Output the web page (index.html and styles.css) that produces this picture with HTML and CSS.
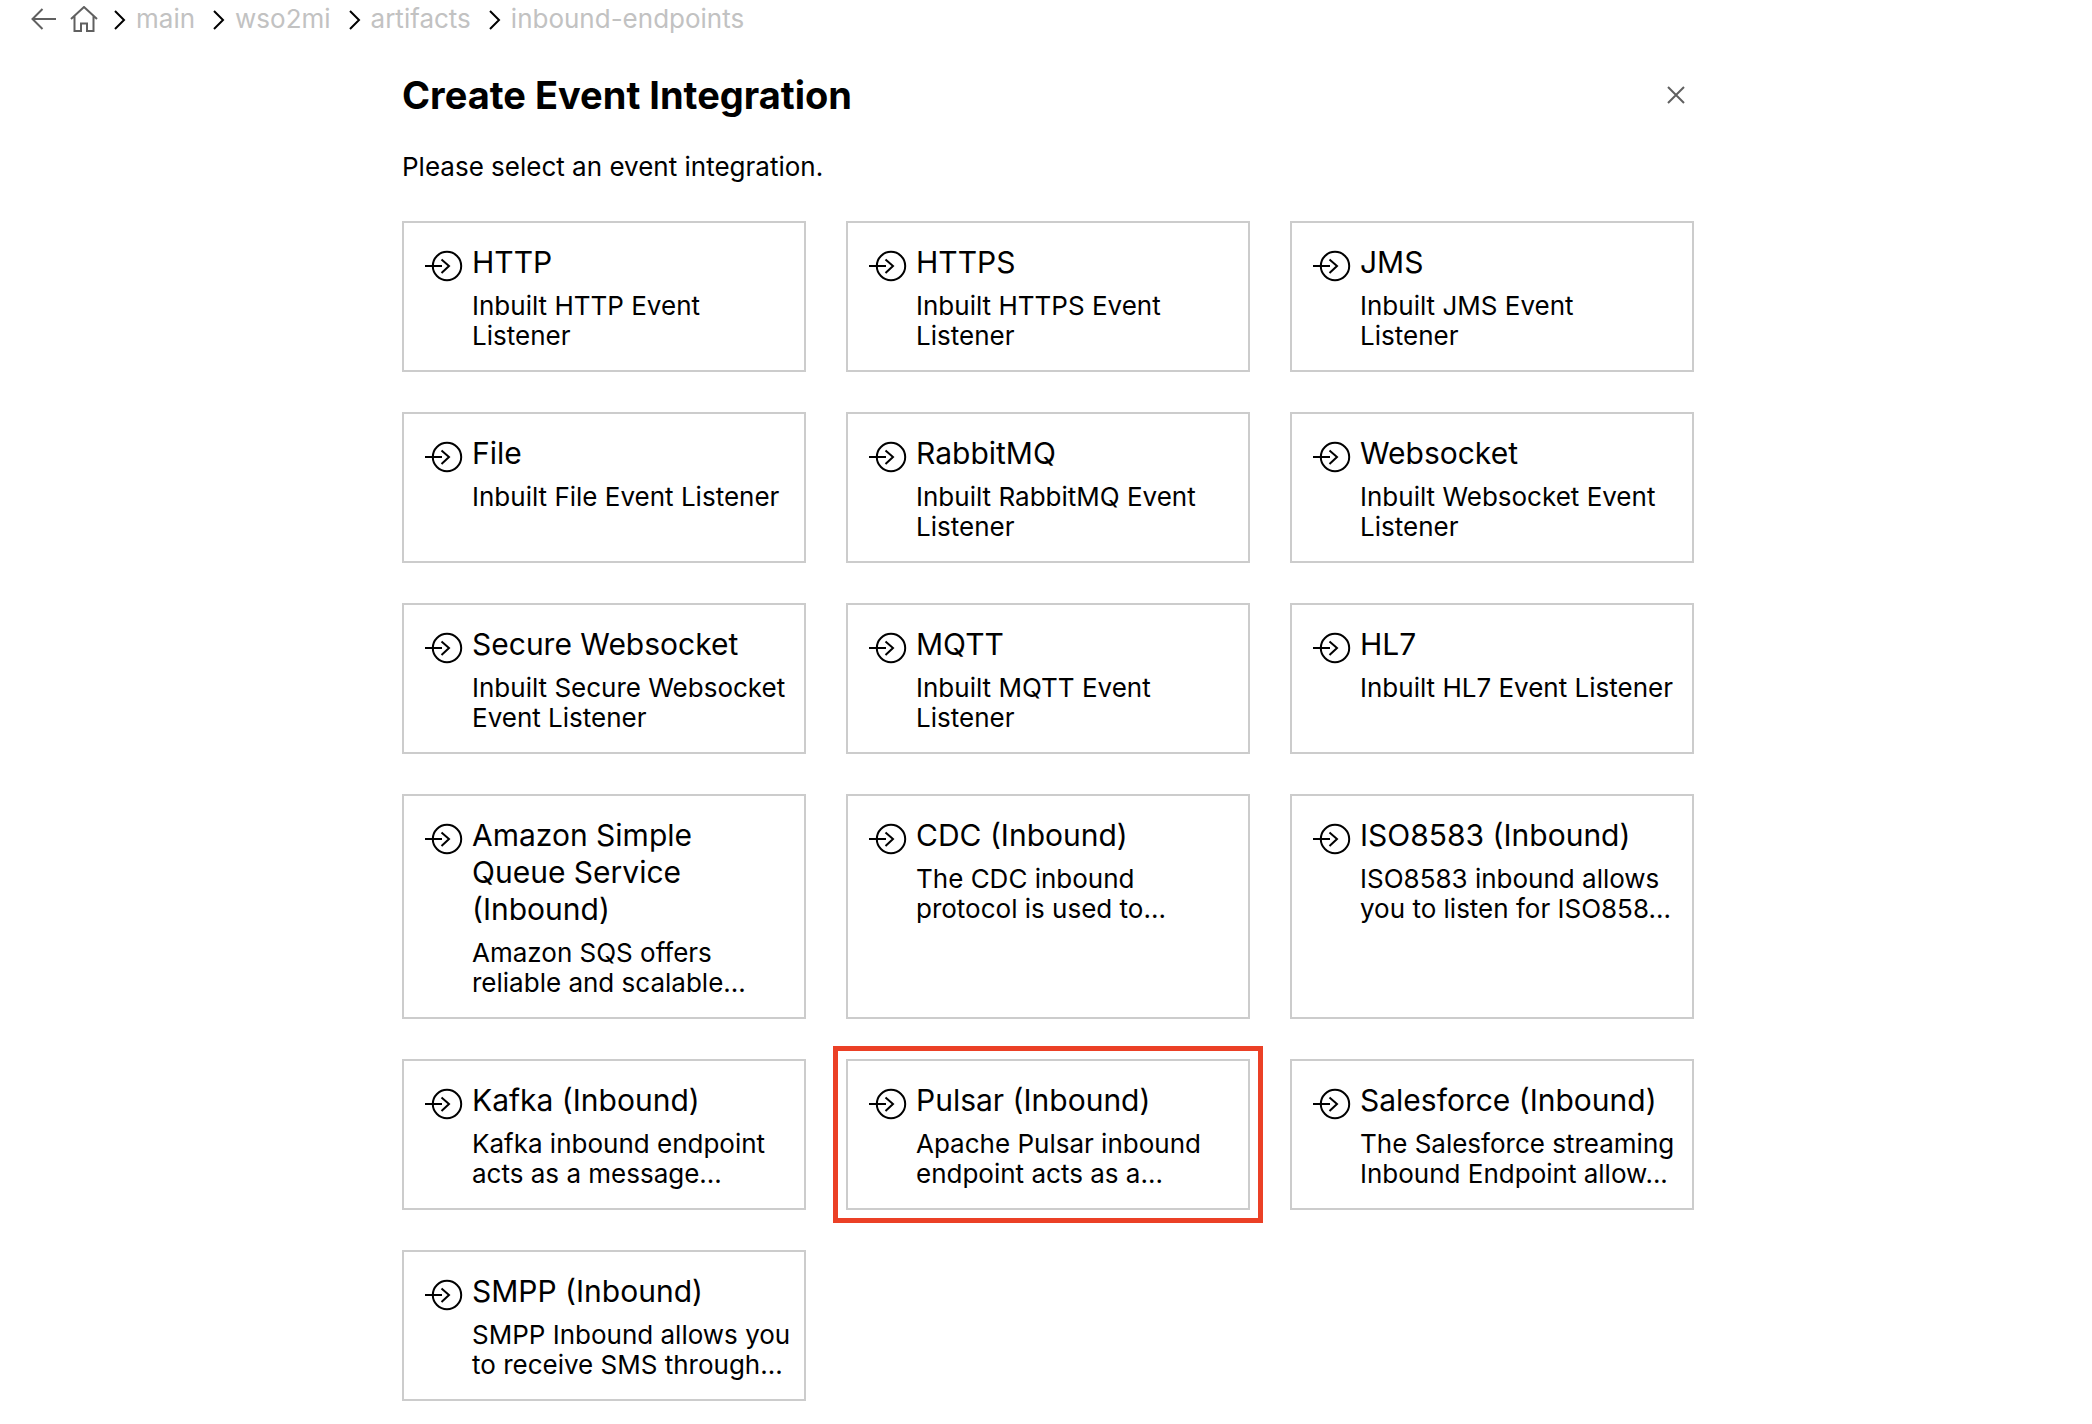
FILE: index.html
```html
<!DOCTYPE html>
<html lang="en">
<head>
<meta charset="utf-8">
<title>Create Event Integration</title>
<link rel="stylesheet" href="styles.css">
</head>
<body>
<svg class="sprite" aria-hidden="true">
  <symbol id="inbound" viewBox="0 0 40 32">
    <circle cx="23" cy="16" r="14.2"/>
    <path d="M1 16H18M17.5 9.5L25 16L17.5 23"/>
  </symbol>
  <symbol id="chevron" viewBox="0 0 12 20">
    <path d="M1 1L10 10L1 19"/>
  </symbol>
</svg>
<nav class="crumbs" aria-label="Breadcrumb">
  <button class="icon-button" type="button" aria-label="Back"><svg width="26" height="22" viewBox="0 0 26 22"><path d="M25 11H1.500M11.500 1L1.500 11L11.500 21"/></svg></button>
  <button class="icon-button home" type="button" aria-label="Home"><svg width="28" height="26" viewBox="0 0 28 26"><path d="M1 13L14 1L27 13M4.500 10V25H11V17.500H17V25H23.500V10"/></svg></button>
  <svg class="chevron"><use href="#chevron"/></svg>
  <a href="#main">main</a>
  <svg class="chevron"><use href="#chevron"/></svg>
  <a href="#wso2mi">wso2mi</a>
  <svg class="chevron"><use href="#chevron"/></svg>
  <a href="#artifacts">artifacts</a>
  <svg class="chevron"><use href="#chevron"/></svg>
  <a href="#inbound-endpoints">inbound-endpoints</a>
</nav>
<main class="panel">
  <header class="panel-head">
    <h1>Create Event Integration</h1>
    <button class="icon-button close" type="button" aria-label="Close"><svg width="20" height="20" viewBox="0 0 20 20"><path d="M2 2L18 18M18 2L2 18"/></svg></button>
  </header>
  <p class="intro">Please select an event integration.</p>
  <div class="grid">
    <button class="card" type="button"><svg class="card-icon"><use href="#inbound"/></svg><span class="card-text"><span class="card-title">HTTP</span><span class="card-desc">Inbuilt HTTP Event<br>Listener</span></span></button>
    <button class="card" type="button"><svg class="card-icon"><use href="#inbound"/></svg><span class="card-text"><span class="card-title">HTTPS</span><span class="card-desc">Inbuilt HTTPS Event<br>Listener</span></span></button>
    <button class="card" type="button"><svg class="card-icon"><use href="#inbound"/></svg><span class="card-text"><span class="card-title">JMS</span><span class="card-desc">Inbuilt JMS Event<br>Listener</span></span></button>
    <button class="card" type="button"><svg class="card-icon"><use href="#inbound"/></svg><span class="card-text"><span class="card-title">File</span><span class="card-desc">Inbuilt File Event Listener</span></span></button>
    <button class="card" type="button"><svg class="card-icon"><use href="#inbound"/></svg><span class="card-text"><span class="card-title">RabbitMQ</span><span class="card-desc">Inbuilt RabbitMQ Event<br>Listener</span></span></button>
    <button class="card" type="button"><svg class="card-icon"><use href="#inbound"/></svg><span class="card-text"><span class="card-title">Websocket</span><span class="card-desc">Inbuilt Websocket Event<br>Listener</span></span></button>
    <button class="card" type="button"><svg class="card-icon"><use href="#inbound"/></svg><span class="card-text"><span class="card-title">Secure Websocket</span><span class="card-desc">Inbuilt Secure Websocket<br>Event Listener</span></span></button>
    <button class="card" type="button"><svg class="card-icon"><use href="#inbound"/></svg><span class="card-text"><span class="card-title">MQTT</span><span class="card-desc">Inbuilt MQTT Event<br>Listener</span></span></button>
    <button class="card" type="button"><svg class="card-icon"><use href="#inbound"/></svg><span class="card-text"><span class="card-title">HL7</span><span class="card-desc">Inbuilt HL7 Event Listener</span></span></button>
    <button class="card" type="button"><svg class="card-icon"><use href="#inbound"/></svg><span class="card-text"><span class="card-title">Amazon Simple<br>Queue Service<br>(Inbound)</span><span class="card-desc">Amazon SQS offers<br>reliable and scalable...</span></span></button>
    <button class="card" type="button"><svg class="card-icon"><use href="#inbound"/></svg><span class="card-text"><span class="card-title">CDC (Inbound)</span><span class="card-desc">The CDC inbound<br>protocol is used to...</span></span></button>
    <button class="card" type="button"><svg class="card-icon"><use href="#inbound"/></svg><span class="card-text"><span class="card-title">ISO8583 (Inbound)</span><span class="card-desc">ISO8583 inbound allows<br>you to listen for ISO858...</span></span></button>
    <button class="card" type="button"><svg class="card-icon"><use href="#inbound"/></svg><span class="card-text"><span class="card-title">Kafka (Inbound)</span><span class="card-desc">Kafka inbound endpoint<br>acts as a message...</span></span></button>
    <button class="card highlighted" type="button"><svg class="card-icon"><use href="#inbound"/></svg><span class="card-text"><span class="card-title">Pulsar (Inbound)</span><span class="card-desc">Apache Pulsar inbound<br>endpoint acts as a...</span></span></button>
    <button class="card" type="button"><svg class="card-icon"><use href="#inbound"/></svg><span class="card-text"><span class="card-title">Salesforce (Inbound)</span><span class="card-desc">The Salesforce streaming<br>Inbound Endpoint allow...</span></span></button>
    <button class="card" type="button"><svg class="card-icon"><use href="#inbound"/></svg><span class="card-text"><span class="card-title">SMPP (Inbound)</span><span class="card-desc">SMPP Inbound allows you<br>to receive SMS through...</span></span></button>
  </div>
</main>
</body>
</html>
```

FILE: styles.css
```css
* { box-sizing: border-box; }
body {
  margin: 0;
  padding-left: 4px;
  background: #fff;
  color: #000;
  font-family: Inter, "Liberation Sans", sans-serif;
  font-size: 26px;
  line-height: 30px;
}
button {
  margin: 0;
  padding: 0;
  border: 0;
  background: none;
  color: inherit;
  font: inherit;
  cursor: pointer;
}
svg {
  display: block;
  flex: none;
  fill: none;
  stroke: currentColor;
  stroke-width: 2;
}
.sprite { position: absolute; width: 0; height: 0; }

.crumbs {
  display: flex;
  align-items: center;
  height: 38px;
  padding-left: 27px;
}
.crumbs a { color: #c2c2c2; text-decoration: none; }
.icon-button { color: #606060; }
.home { margin-left: 13px; }
.chevron { width: 12px; height: 20px; margin: 2px 10px 0 18px; }
.home + .chevron { margin-left: 16px; }

.panel { max-width: 1292px; margin: 0 auto; }
.panel-head {
  display: flex;
  align-items: center;
  justify-content: space-between;
  height: 114px;
  padding-right: 8px;
}
h1 { margin: 0; font-size: 38px; line-height: 46px; font-weight: 700; }
.intro { margin: 0 0 39px; }

.grid {
  display: grid;
  grid-template-columns: repeat(auto-fit, minmax(400px, 1fr));
  gap: 40px;
}
.card {
  display: flex;
  align-items: flex-start;
  padding: 21px 20px 19px;
  border: 2px solid #ccc;
  text-align: left;
}
.card-icon { width: 40px; height: 32px; margin: 6px 8px 0 0; }
.card-text { display: flex; flex-direction: column; gap: 10px; white-space: nowrap; }
.card-title { font-size: 30px; line-height: 37px; }
.highlighted { outline: 5px solid #eb4026; outline-offset: 8px; }
```
